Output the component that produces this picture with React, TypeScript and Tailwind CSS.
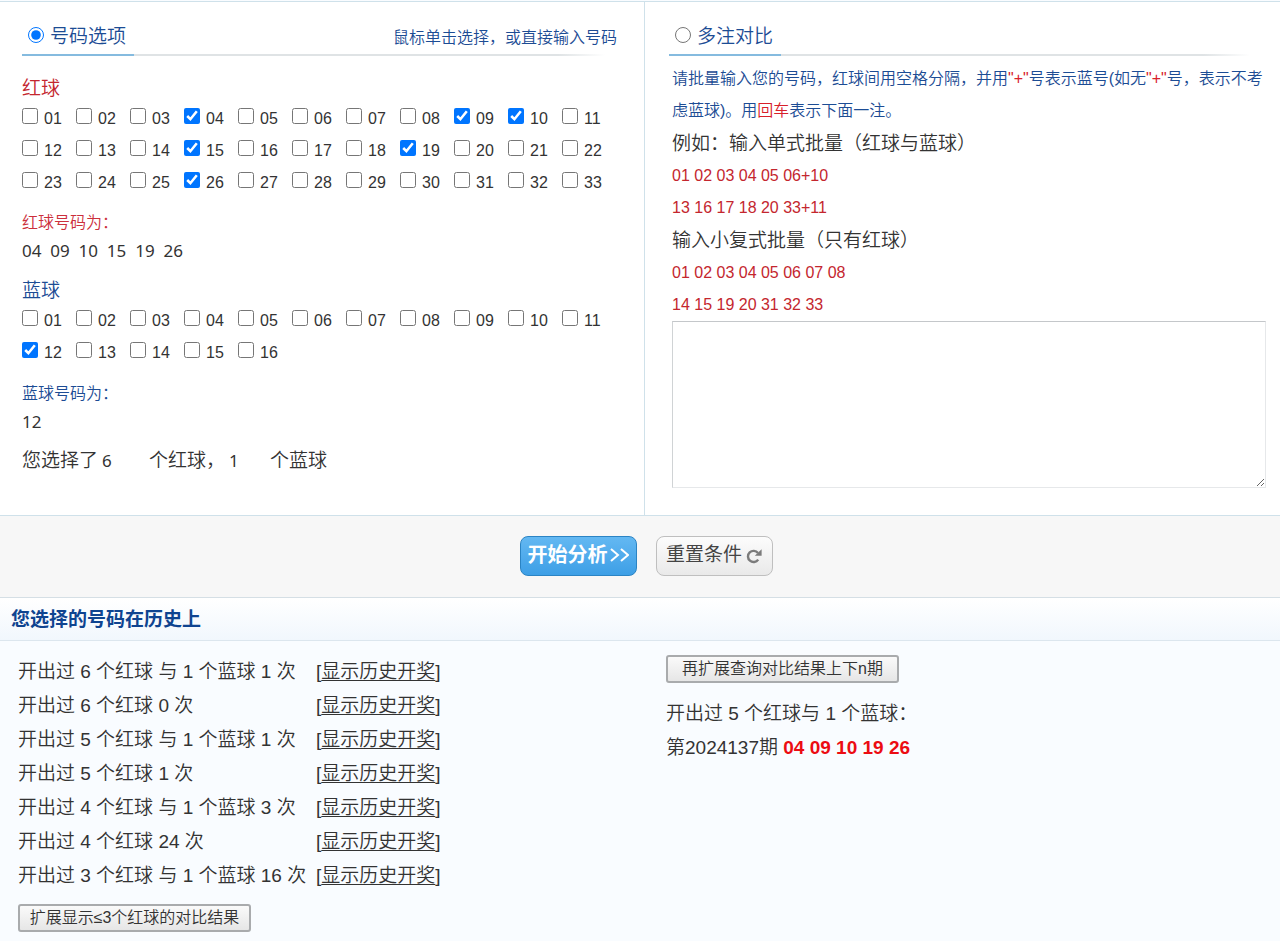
import { useState } from "react";

const RED_MAX = 33;
const BLUE_MAX = 16;

const results = [
  "开出过 6 个红球 与 1 个蓝球 1 次",
  "开出过 6 个红球 0 次",
  "开出过 5 个红球 与 1 个蓝球 1 次",
  "开出过 5 个红球 1 次",
  "开出过 4 个红球 与 1 个蓝球 3 次",
  "开出过 4 个红球 24 次",
  "开出过 3 个红球 与 1 个蓝球 16 次",
];

const inputFont =
  "font-['Noto_Sans','Noto_Sans_CJK_SC',sans-serif] text-[17px] font-normal bg-transparent outline-none";

const pad = (n: number) => String(n).padStart(2, "0");

function BallGrid({
  name,
  max,
  selected,
  onToggle,
}: {
  name: string;
  max: number;
  selected: number[];
  onToggle: (n: number) => void;
}) {
  return (
    <div className="grid grid-cols-[repeat(11,54px)] text-base">
      {Array.from({ length: max }, (_, i) => i + 1).map((n) => (
        <label key={n} className="flex h-8 items-center gap-1.5">
          <input
            type="checkbox"
            name={name}
            className="size-4"
            checked={selected.includes(n)}
            onChange={() => onToggle(n)}
          />
          <span className="pt-1.5">{pad(n)}</span>
        </label>
      ))}
    </div>
  );
}

function ModeHeader({
  title,
  hint,
  checked,
  onSelect,
}: {
  title: string;
  hint?: string;
  checked: boolean;
  onSelect: () => void;
}) {
  return (
    <div className="flex h-[54px] items-end text-[#1c4c94]">
      <label className="flex h-10 w-28 items-center gap-1.5 border-b-2 border-[#85bbdf] pl-1.5 text-[19px]">
        <input type="radio" name="mode" className="size-4" checked={checked} onChange={onSelect} />
        <span className="pt-1">{title}</span>
      </label>
      <div className="flex-1">
        {hint && <p className="pb-1 text-right leading-6">{hint}</p>}
        <div className="mr-3 h-0.5 bg-linear-to-r from-[#dfe3e5] from-90% to-white" />
      </div>
    </div>
  );
}

function ResetIcon() {
  return (
    <svg viewBox="0 0 16 16" className="size-4" fill="none" aria-hidden="true">
      <path
        d="M12 5A5.6 5.6 0 1 0 12.2 11.6"
        stroke="#7b7b7b"
        strokeWidth="2.4"
      />
      <path d="M15.6 1.2v6.6H8.8z" fill="#7b7b7b" />
    </svg>
  );
}

function toggle(list: number[], n: number) {
  return list.includes(n) ? list.filter((x) => x !== n) : [...list, n].sort((a, b) => a - b);
}

export default function App() {
  const [mode, setMode] = useState("pick");
  const [red, setRed] = useState([4, 9, 10, 15, 19, 26]);
  const [blue, setBlue] = useState([12]);

  const smallButton =
    "h-7 rounded-[3px] border-2 border-[#a9abad] bg-linear-to-b from-[#fafafa] to-[#e6e6e6] text-base leading-6";

  return (
    <div className="flex min-h-screen flex-col bg-[#f9fcff] font-['Liberation_Sans','Noto_Sans_CJK_SC',sans-serif] text-base font-[350] text-[#333]">
      <div className="mt-px grid grid-cols-[645fr_635fr] border-y border-[#cfe1ea] bg-white">
        {/* 号码选项 */}
        <section className="border-r border-[#cfe1ea] pb-[42px] pl-[22px]">
          <div className="pr-[27px]">
            <ModeHeader
              title="号码选项"
              hint="鼠标单击选择，或直接输入号码"
              checked={mode === "pick"}
              onSelect={() => setMode("pick")}
            />
          </div>

          <h3 className="mt-5 h-6 text-[19px] leading-[26px] text-[#c4262e]">红球</h3>
          <BallGrid name="red" max={RED_MAX} selected={red} onToggle={(n) => setRed(toggle(red, n))} />
          <label htmlFor="red-text" className="mt-[15px] block leading-6 text-[#cc2f3c]">
            红球号码为：
          </label>
          <input
            id="red-text"
            readOnly
            value={red.map(pad).join("  ")}
            className={`mt-1 block h-6 w-full ${inputFont}`}
          />

          <h3 className="mt-[15px] h-6 text-[19px] leading-[26px] text-[#1c4c94]">蓝球</h3>
          <BallGrid name="blue" max={BLUE_MAX} selected={blue} onToggle={(n) => setBlue(toggle(blue, n))} />
          <label htmlFor="blue-text" className="mt-4 block leading-6 text-[#1c4c94]">
            蓝球号码为：
          </label>
          <input
            id="blue-text"
            readOnly
            value={blue.map(pad).join("  ")}
            className={`mt-1 block h-6 w-full ${inputFont}`}
          />

          <div className="mt-[15px] flex h-6 items-center text-[19px] leading-6">
            <label htmlFor="red-count">您选择了</label>
            <input id="red-count" readOnly value={red.length} className={`ml-1 h-6 w-[47px] ${inputFont}`} />
            <label htmlFor="blue-count">个红球，</label>
            <input id="blue-count" readOnly value={blue.length} className={`ml-1 h-6 w-[41px] ${inputFont}`} />
            <span>个蓝球</span>
          </div>
        </section>

        {/* 多注对比 */}
        <section>
          <div className="pr-[18px] pl-6">
            <ModeHeader
              title="多注对比"
              checked={mode === "batch"}
              onSelect={() => setMode("batch")}
            />
          </div>
          <div className="mt-[7px] pr-2.5 pl-[27px] leading-8 text-[#c4262e]">
            <p className="text-[#1c4c94]">
              请批量输入您的号码，红球间用空格分隔，并用<span className="text-[#d8202a]">"+"</span>
              号表示蓝号(如无<span className="text-[#d8202a]">"+"</span>号，表示不考虑蓝球)。用
              <span className="text-[#d8202a]">回车</span>表示下面一注。
            </p>
            <p className="text-[19px] leading-[33px] text-[#333]">例如：输入单式批量（红球与蓝球）</p>
            <p>01 02 03 04 05 06+10</p>
            <p>13 16 17 18 20 33+11</p>
            <p className="text-[19px] leading-[33px] text-[#333]">输入小复式批量（只有红球）</p>
            <p>01 02 03 04 05 06 07 08</p>
            <p>14 15 19 20 31 32 33</p>
          </div>
          <div className="pr-3.5 pl-[27px]">
            <textarea
              aria-label="多注号码"
              className="block h-[167px] w-full border border-t-[#c4c7ca] border-r-[#e6e8ea] border-b-[#e6e8ea] border-l-[#d0d3d5] bg-white p-1 text-[#333] outline-none"
            />
          </div>
        </section>
      </div>

      <div className="flex h-[82px] items-center justify-center gap-[19px] border-b border-[#d5dfe5] bg-[#f7f7f7] pb-0.5 pl-3">
        <button className="flex h-10 w-[117px] items-center justify-center gap-px rounded-lg border border-[#2b84c4] bg-linear-to-b from-[#63b8f2] to-[#3d9fe6] pb-0.5 text-xl font-bold text-white">
          开始分析
          <svg viewBox="0 0 20 16" className="h-4 w-5" fill="none" stroke="white" strokeWidth="2" aria-hidden="true">
            <path d="M2 2l7 6-7 6M12 2l7 6-7 6" />
          </svg>
        </button>
        <button className="flex h-10 w-[117px] items-center justify-center gap-1 rounded-lg border border-[#bfbfbf] bg-linear-to-b from-[#fcfcfc] to-[#e9e9e9] text-[19px] font-normal text-[#444]">
          重置条件
          <ResetIcon />
        </button>
      </div>

      <h2 className="h-[43px] border-b border-[#dce6ee] bg-linear-to-b from-white to-[#f1f7fd] pl-[11px] text-[19px] leading-[44px] font-bold text-[#0f4490]">
        您选择的号码在历史上
      </h2>

      <div className="grid grid-cols-[666fr_614fr] text-[19px]">
        <div className="pt-3.5 pb-2 pl-[18px]">
          <table>
            <tbody>
              {results.map((text) => (
                <tr key={text} className="h-[34px]">
                  <td className="w-[298px] p-0 leading-6">{text}</td>
                  <td className="p-0 leading-6">
                    [<a href="#history" className="underline underline-offset-2">显示历史开奖</a>]
                  </td>
                </tr>
              ))}
            </tbody>
          </table>
          <button className={`mt-[11px] block w-[233px] ${smallButton}`}>
            扩展显示≤3个红球的对比结果
          </button>
        </div>

        <div className="pt-3.5">
          <button className={`mb-3.5 block w-[233px] ${smallButton}`}>
            再扩展查询对比结果上下n期
          </button>
          <p className="leading-[34px]">开出过 5 个红球与 1 个蓝球：</p>
          <p className="leading-[34px]">
            第2024137期 <strong className="font-bold text-[#ec0c12]">04 09 10 19 26</strong>
          </p>
        </div>
      </div>
    </div>
  );
}
